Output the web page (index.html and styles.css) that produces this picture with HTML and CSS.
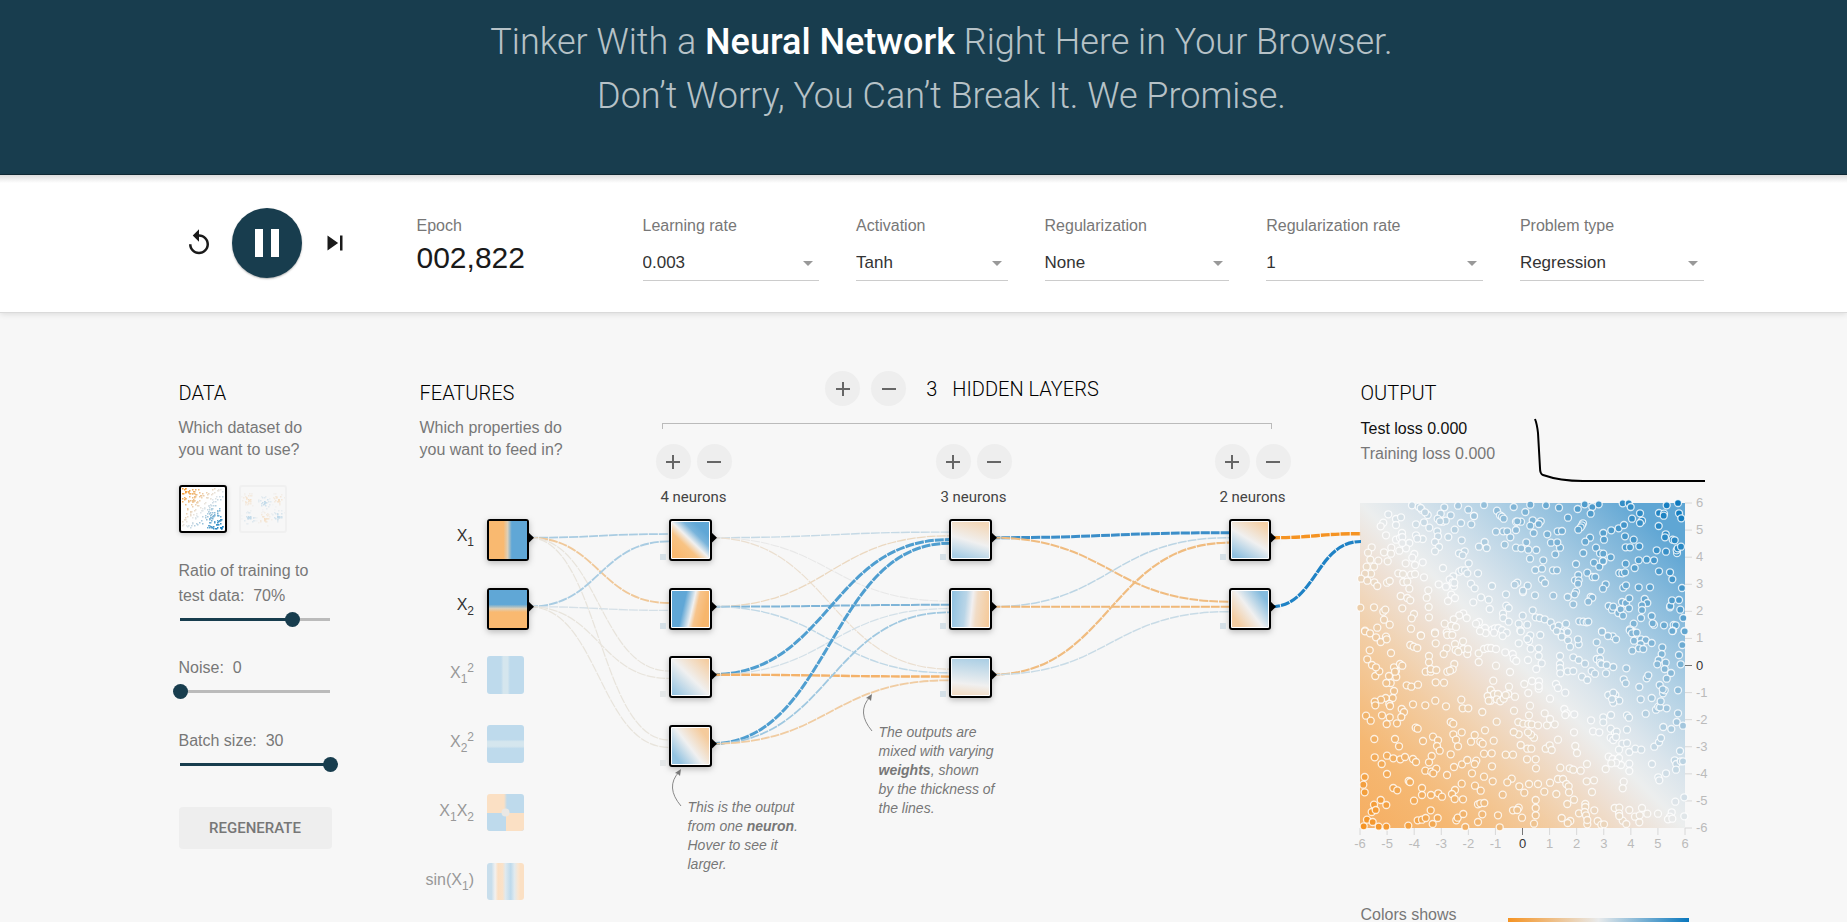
FILE: index.html
```html
<!DOCTYPE html>
<html lang="en">
<head>
<meta charset="utf-8">
<title>Neural Network Playground</title>
<link rel="stylesheet" href="styles.css">
</head>
<body>
<header class="hero">
  <h1>Tinker With a <b>Neural Network</b> Right Here in Your Browser.<br>Don’t Worry, You Can’t Break It. We Promise.</h1>
</header>

<section class="top-controls">
  <div class="page top-row">
    <div class="timeline">
      <button class="icon-btn" aria-label="Reset"><svg width="30" height="30" viewBox="0 0 24 24"><path d="M12 5V1L7 6l5 5V7c3.31 0 6 2.69 6 6s-2.69 6-6 6-6-2.69-6-6H4c0 4.42 3.58 8 8 8s8-3.58 8-8-3.58-8-8-8z"/></svg></button>
      <button class="play-btn" aria-label="Pause"><svg width="48" height="48" viewBox="0 0 24 24"><path d="M6 19h4V5H6v14zm8-14v14h4V5h-4z"/></svg></button>
      <button class="icon-btn" aria-label="Step"><svg width="30" height="30" viewBox="0 0 24 24"><path d="M6 18l8.500-6L6 6v12zM16 6v12h2V6h-2z"/></svg></button>
    </div>
    <div class="epoch"><span class="label">Epoch</span><span class="epoch-value">002,822</span></div>
    <div class="selects">
      <div class="field"><label for="lr">Learning rate</label><select id="lr"><option>0.003</option></select></div>
      <div class="field"><label for="act">Activation</label><select id="act"><option>Tanh</option></select></div>
      <div class="field"><label for="reg">Regularization</label><select id="reg"><option>None</option></select></div>
      <div class="field"><label for="rate">Regularization rate</label><select id="rate"><option>1</option></select></div>
      <div class="field"><label for="problem">Problem type</label><select id="problem"><option>Regression</option></select></div>
    </div>
  </div>
</section>

<main class="page main">
  <section class="data">
    <h2>Data</h2>
    <p class="hint">Which dataset do<br>you want to use?</p>
    <div class="datasets">
      <button class="thumb selected" aria-label="Plane"><svg id="plane" width="44" height="44"></svg></button>
      <button class="thumb" aria-label="Multi gaussian"><svg id="gauss" width="44" height="44"></svg></button>
    </div>
    <div class="slider ratio"><label for="ratio">Ratio of training to<br>test data:&nbsp; 70%</label><input class="r75" id="ratio" type="range" min="10" max="90" value="70"></div>
    <div class="slider"><label for="noise">Noise:&nbsp; 0</label><input class="r0" id="noise" type="range" min="0" max="50" value="0"></div>
    <div class="slider"><label for="batch">Batch size:&nbsp; 30</label><input class="r100" id="batch" type="range" min="1" max="30" value="30"></div>
    <button class="regen">Regenerate</button>
  </section>

  <div class="right">
    <section class="network">
      <div class="net-head">
        <div class="features">
          <h2>Features</h2>
          <p class="hint">Which properties do<br>you want to feed in?</p>
        </div>
        <div class="hidden-layers">
          <div class="hidden-title">
            <button class="round" aria-label="Add layer"><svg width="24" height="24" viewBox="0 0 24 24"><path d="M19 13h-6v6h-2v-6H5v-2h6V5h2v6h6v2z"/></svg></button>
            <button class="round" aria-label="Remove layer"><svg width="24" height="24" viewBox="0 0 24 24"><path d="M19 13H5v-2h14v2z"/></svg></button>
            <h2><span class="count">3</span>Hidden layers</h2>
          </div>
          <div class="bracket"></div>
        </div>
      </div>
      <div class="diagram">
        <svg id="net" width="941" height="490" viewBox="420 432 941 490"></svg>
        <div class="layer-ctl l1"><div class="pair"><button class="round" aria-label="Add neuron"><svg width="24" height="24" viewBox="0 0 24 24"><path d="M19 13h-6v6h-2v-6H5v-2h6V5h2v6h6v2z"/></svg></button><button class="round" aria-label="Remove neuron"><svg width="24" height="24" viewBox="0 0 24 24"><path d="M19 13H5v-2h14v2z"/></svg></button></div><span>4 neurons</span></div>
        <div class="layer-ctl l2"><div class="pair"><button class="round" aria-label="Add neuron"><svg width="24" height="24" viewBox="0 0 24 24"><path d="M19 13h-6v6h-2v-6H5v-2h6V5h2v6h6v2z"/></svg></button><button class="round" aria-label="Remove neuron"><svg width="24" height="24" viewBox="0 0 24 24"><path d="M19 13H5v-2h14v2z"/></svg></button></div><span>3 neurons</span></div>
        <div class="layer-ctl l3"><div class="pair"><button class="round" aria-label="Add neuron"><svg width="24" height="24" viewBox="0 0 24 24"><path d="M19 13h-6v6h-2v-6H5v-2h6V5h2v6h6v2z"/></svg></button><button class="round" aria-label="Remove neuron"><svg width="24" height="24" viewBox="0 0 24 24"><path d="M19 13H5v-2h14v2z"/></svg></button></div><span>2 neurons</span></div>
        <p class="callout c1">This is the output<br>from one <b>neuron</b>.<br>Hover to see it<br>larger.</p>
        <p class="callout c2">The outputs are<br>mixed with varying<br><b>weights</b>, shown<br>by the thickness of<br>the lines.</p>
      </div>
    </section>

    <section class="output">
      <h2>Output</h2>
      <div class="metrics">
        <div class="losses"><div class="test">Test loss 0.000</div><div>Training loss 0.000</div></div>
        <svg class="loss-chart" width="172" height="70" viewBox="0 0 172 70"><path d="M2 1Q4 6 5 15L7 50Q7 56 10 57Q27 63 50 63H172"/></svg>
      </div>
      <svg id="heat" width="352" height="358" viewBox="-8 -6 352 358"></svg>
      <div class="legend"><span>Colors shows</span><div class="legend-bar"></div></div>
    </section>
  </div>
</main>
<script src="script.js"></script>
</body>
</html>
```
FILE: styles.css
```css
* { box-sizing: border-box; }
body {
  margin: 0;
  height: 100vh;
  overflow: hidden;
  background: #f7f7f7;
  color: #777;
  font: 16px/22px "Liberation Sans", Arial, sans-serif;
}
button { border: 0; padding: 0; background: none; cursor: pointer; display: flex; align-items: center; justify-content: center; }
h1, h2, p { margin: 0; }
h2 {
  font: 300 20px/24px Roboto, sans-serif;
  color: #000;
  text-transform: uppercase;
}
.page { width: calc(100% - 36px); max-width: 1526px; margin: 0 auto; left: 18px; position: relative; }

.hero { height: 175px; padding: 15px 0 0 36px; background: #183d4e; border-bottom: 1px solid #0f2a36; }
.hero h1 {
  font: 300 36px/54px Roboto, sans-serif;
  text-align: center;
  color: rgba(255, 255, 255, 0.7);
}
.hero b { font-weight: 500; color: #fff; }

.top-controls {
  background: linear-gradient(#dcdcdc, #fff 8px);
  border-bottom: 1px solid #dadada;
  box-shadow: 0 1px 6px rgba(0, 0, 0, 0.12);
  position: relative;
}
.top-row { display: flex; height: 137px; align-items: flex-start; }
.timeline { width: 238px; flex: none; display: flex; align-items: center; padding: 33px 0 0 5px; gap: 18px; }
.icon-btn { width: 30px; height: 30px; fill: #1a1a1a; }
.play-btn { width: 70px; height: 70px; border-radius: 50%; background: #183d4e; fill: #fff; box-shadow: 0 1px 2px rgba(0, 0, 0, 0.3); }
.epoch { width: 226px; flex: none; padding-top: 40px; display: flex; flex-direction: column; }
.epoch-value { font-size: 30px; line-height: 34px; margin-top: 4px; color: #1a1a1a; }
.selects { flex: 1; padding-top: 40px; display: grid; grid-template-columns: 176fr 151fr 184fr 216fr 184fr; gap: 37px; }
.field { display: flex; flex-direction: column; gap: 9px; }
select {
  appearance: none;
  width: 100%;
  height: 35px;
  border: 0;
  border-bottom: 1px solid #ccc;
  border-radius: 0;
  padding: 0;
  color: #333;
  font: 17px/34px "Liberation Sans", Arial, sans-serif;
  background: url("data:image/svg+xml,%3Csvg xmlns='http://www.w3.org/2000/svg' width='10' height='5'%3E%3Cpath d='M0 0h10L5 5z' fill='%23999'/%3E%3C/svg%3E") no-repeat right 6px center;
}

.main { display: flex; justify-content: space-between; padding-top: 68px; }
.data { width: 154px; }
.hint { padding-top: 12px; line-height: 22px; white-space: nowrap; }
.datasets { display: flex; gap: 12px; padding-top: 24px; }
.thumb { width: 48px; height: 48px; border: 2px solid #ddd; border-radius: 3px; background: #f7f7f7; opacity: 0.25; }
.thumb.selected { border-color: #000; background: #fff; opacity: 1; box-shadow: 0 1px 5px rgba(0, 0, 0, 0.2); }
.slider { height: 73px; white-space: nowrap; line-height: 25px; }
.slider.ratio { padding-top: 25px; height: 122px; }
.slider label { display: block; }
input[type="range"] {
  appearance: none;
  display: block;
  width: 165px;
  height: 15px;
  margin: 4px 0 0 -6px;
  border: solid transparent;
  border-width: 6px 0;
  background: none;
  position: relative;
}
input[type="range"]::-webkit-slider-runnable-track {
  height: 3px;
  background: linear-gradient(#183d4e, #183d4e) no-repeat 7px 0 / 0 3px, linear-gradient(#bbb, #bbb) no-repeat 7px 0 / 150px 3px;
}
input.r75::-webkit-slider-runnable-track { background-size: 113px 3px, 150px 3px; }
input.r100::-webkit-slider-runnable-track { background-size: 150px 3px, 150px 3px; }
input[type="range"]::-webkit-slider-thumb {
  appearance: none;
  width: 15px;
  height: 15px;
  margin-top: -6px;
  border-radius: 50%;
  background: #183d4e;
}
.regen {
  width: 153px;
  height: 42px;
  margin-top: 6px;
  border-radius: 4px;
  background: #eee;
  color: #777;
  font: 500 15px/42px Roboto, sans-serif;
  text-transform: uppercase;
}

.right { display: flex; }
.network { width: 941px; }
.net-head { display: flex; height: 51px; }
.features { width: 242px; }
.hidden-layers { width: 610px; }
.hidden-title { display: flex; align-items: center; justify-content: center; gap: 11px; height: 35px; margin-top: -10px; padding-right: 9px; }
.hidden-title h2 { padding-left: 9px; }
.count { margin-right: 15px; }
.bracket { height: 6px; margin-top: 17px; border: 1px solid #bbb; border-bottom: 0; }
.round { width: 35px; height: 35px; border-radius: 50%; background: #eee; fill: #666; }
.diagram { position: relative; }
#net { display: block; overflow: visible; }
.layer-ctl { position: absolute; top: 12px; width: 78px; display: flex; flex-direction: column; gap: 7px; align-items: center; font: 15px/22px Roboto, sans-serif; color: #444; }
.pair { display: flex; gap: 6px; }
.l1 { left: 235px; }
.l2 { left: 515px; }
.l3 { left: 794px; }
.callout { position: absolute; font-size: 14px; line-height: 19px; font-style: italic; white-space: nowrap; }
.c1 { left: 268px; top: 366px; }
.c2 { left: 459px; top: 291px; }

.output { width: 344px; }
.metrics { display: flex; justify-content: space-between; height: 92px; padding-top: 11px; }
.losses { line-height: 25px; white-space: nowrap; }
.test { color: #111; }
.loss-chart { margin-top: 2px; fill: none; stroke: #000; stroke-width: 2; }
#heat { display: block; margin-left: -9px; overflow: visible; }
.legend { display: flex; justify-content: space-between; padding: 49px 16px 0 0; }
.legend-bar { width: 181px; height: 12px; margin-top: 14px; background: linear-gradient(to right, #f59322, #e8eaeb, #0877bd); flex: none; }

#net text { font: 16px "Liberation Sans", Arial, sans-serif; fill: #333; text-anchor: end; }
#net text.off { fill: #999; }
#net .small { font-size: 12px; }
#net .link { fill: none; stroke-dasharray: 9 1; }
#net .arrow { fill: none; stroke: #888; }
#net .tip { fill: #777; }
#net .active { filter: drop-shadow(0 2px 3px rgba(0, 0, 0, 0.25)); }
#heat text { font: 13px "Liberation Sans", Arial, sans-serif; fill: #bbb; }
#heat text.zero { fill: #333; }
#heat circle { stroke: #fff; stroke-width: 1.3px; stroke-opacity: 0.8; }
```
FILE: script.js
```js
const NS = 'http://www.w3.org/2000/svg';
function el(parent, name, attrs, text) {
  const e = document.createElementNS(NS, name);
  for (const k in attrs) e.setAttribute(k, attrs[k]);
  if (text !== undefined) e.textContent = text;
  parent.appendChild(e);
  return e;
}
const mix = (a, b, t) => 'rgb(' + a.map((v, i) => Math.round(v + (b[i] - v) * t)).join() + ')';
const ORANGE = [245, 147, 34], MID = [232, 234, 235], BLUE = [8, 119, 189];
const color = t => t < 0.5 ? mix(ORANGE, MID, t * 2) : mix(MID, BLUE, t * 2 - 1);

let gid = 0;
function gradient(svg, v, stops) {
  const id = 'g' + gid++;
  const g = el(svg, 'linearGradient', { id, x1: v[0], y1: v[1], x2: v[2], y2: v[3] });
  stops.forEach(s => el(g, 'stop', { offset: s[0], 'stop-color': s[1] }));
  return 'url(#' + id + ')';
}

/* Network */
const net = document.getElementById('net');
const ROWS = [519, 588, 656, 725, 794, 863];
const XS = [487, 669, 949, 1229];
function link(x1, r1, x2, y2, c, w) {
  const y1 = r1 + 18.7, m = (x1 + x2) / 2;
  el(net, 'path', { class: 'link', d: `M${x1} ${y1}C${m} ${y1} ${m} ${y2} ${x2} ${y2}`, stroke: c, 'stroke-width': w });
}
const WEIGHTS = [
  [[['#a9cce2', 1.7], ['#f0c899', 1.9], ['#e8e4dc', 1.2], ['#e8e4dc', 1.2]],
   [['#a9cce2', 1.9], ['#d5e0e7', 1.3], ['#e8e4dc', 1.2], ['#e8e4dc', 1.2]]],
  [[['#c5d9e5', 1.4], ['#e8e8e8', 1.1], ['#ebdfd0', 1.2]],
   [['#ebd8c0', 1.3], ['#7fb5d8', 2], ['#c0d8e6', 1.4]],
   [['#4f9ed0', 3], ['#d3e0e8', 1.2], ['#f4b26a', 2.4]],
   [['#4f9ed0', 3], ['#a0c8e0', 1.8], ['#f0cca2', 1.8]]],
  [[['#3b8ec9', 3], ['#f0bc80', 2]],
   [['#bcd5e4', 1.5], ['#f0b878', 2]],
   [['#f0bc80', 2.2], ['#c8dbe6', 1.5]]]
];
const SPACING = [7.4, 3.75, 5];
WEIGHTS.forEach((layer, l) => layer.forEach((outs, i) => outs.forEach(([c, w], j) => {
  const y2 = ROWS[j] + 18.7 + (i - (layer.length - 1) / 2) * SPACING[l];
  link(XS[l] + 42, ROWS[i], XS[l + 1], y2, c, w);
})));
link(1271, 519, 1361, 533.7, '#f59322', 3.4);
link(1271, 588, 1361, 541.5, '#1f82c5', 3.2);

const M = '#f0f0f0', O = '#f9b970', B = '#60a7d6', PB = '#bedaec';
const SKINS = [
  [[[0, 0, 1, 0], [[.38, O], [.49, '#dccfb9'], [.6, B]]],
   [[0, 0, 0, 1], [[.38, B], [.49, '#dccfb9'], [.58, O]]]],
  [[[0, 1, 1, 0], [[.1, O], [.35, '#f8c384'], [.5, M], [.66, '#79b4db'], [.8, B]]],
   [[0, .39, 1, .61], [[.3, B], [.54, M], [.66, '#f7c48c'], [.9, '#f7b66c']]],
   [[0, 1, 1, 0], [[.02, '#93c3e1'], [.5, M], [.98, '#f5cb9c']]],
   [[.1, .8, .9, .2], [[0, '#93c3e1'], [.47, M], [1, '#f5cb9c']]]],
  [[[.35, 1, .65, 0], [[0, '#a9cee5'], [.47, M], [1, '#f3d8b9']]],
   [[0, .45, 1, .55], [[0, '#93c3e1'], [.35, '#b9d5e7'], [.53, '#f1eff0'], [.66, '#f1dcc6'], [1, '#f5cb9c']]],
   [[.55, 0, .45, 1], [[0, '#aed0e5'], [.7, M], [1, '#f2ddc7']]]],
  [[[.2, 1, .8, 0], [[0, '#8ec0e0'], [.5, M], [1, '#f4cfa5']]],
   [[.1, .8, .9, .2], [[0, '#f4cda2'], [.48, M], [1, '#84bbde']]]]
];
SKINS.forEach((layer, l) => layer.forEach(([v, stops], i) => {
  const x = XS[l], y = ROWS[i], w = l === 3 || l === 0 ? 42 : 43;
  const g = el(net, 'g', { class: 'active' });
  el(g, 'rect', { x, y, width: w, height: 42, rx: 3, fill: '#000' });
  el(g, 'path', { d: `M${x + w - 1} ${y + 13}l6 5.700l-6 5.700z` });
  if (l) {
    el(g, 'rect', { x: x + 2, y: y + 2, width: w - 4, height: 38, rx: 1, fill: '#fff' });
    el(net, 'rect', { x: x - 9, y: y + 35, width: 6, height: 6, fill: (l === 1 && i > 1) ? '#e4e7e8' : '#d5e0e7' });
  }
  const p = l ? 3 : 2;
  el(g, 'rect', { x: x + p, y: y + p, width: w - 2 * p, height: 42 - 2 * p, fill: gradient(net, v, stops) });
}));
/* Inactive features */
function tile(i, v, stops) {
  el(net, 'rect', { x: 487, y: ROWS[i], width: 37, height: i < 4 ? 38 : 37, rx: 3, fill: gradient(net, v, stops) });
}
const band = [[.38, PB], [.44, '#d5e6ee'], [.56, '#d5e6ee'], [.62, PB]];
tile(2, [0, 0, 1, 0], band);
tile(3, [0, 0, 0, 1], band);
tile(4, [0, 0, 1, 0], [[.46, '#fbe0c4'], [.54, PB]]);
el(net, 'path', { d: 'M487 813h19v18h-16q-3 0-3-3z', fill: PB });
el(net, 'path', { d: 'M506 813h18v15q0 3-3 3h-15z', fill: '#fbe0c4' });
el(net, 'circle', { cx: 505.5, cy: 812.5, r: 4, fill: '#eae8e4' });
tile(5, [0, 0, 1, 0], [[.12, '#c8deec'], [.22, '#f2f1f0'], [.3, '#fbdfc2'], [.42, '#fae2c9'], [.5, '#dfe9ee'], [.64, PB], [.74, '#e0eaef'], [.84, '#f9e6d2'], [.9, '#fbe0c4']]);

function label(row, off, parts) {
  const t = el(net, 'text', { x: 474, y: ROWS[row] + 22, class: off ? 'off' : 'on' });
  parts.forEach(([s, dy]) => el(t, 'tspan', { dy: dy || 0, class: /^\d$/.test(s) ? 'small' : 'big' }, s));
}
label(0, 0, [['X'], ['1', 5]]);
label(1, 0, [['X'], ['2', 5]]);
label(2, 1, [['X'], ['1', 5], ['2', -11]]);
label(3, 1, [['X'], ['2', 5], ['2', -11]]);
label(4, 1, [['X'], ['1', 5], ['X', -5], ['2', 5]]);
label(5, 1, [['sin(X'], ['1', 5], [')', -5]]);

[[680, 769], [871, 694]].forEach(([x, y]) => {
  el(net, 'path', { class: 'arrow', d: `M${x + 1} ${y + 37}Q${x - 15} ${y + 18} ${x - 1} ${y + 3}` });
  el(net, 'path', { class: 'tip', d: `M${x + 1} ${y}l-1 7l-2-2l-3-1z` });
});

/* Output heatmap */
const heat = document.getElementById('heat');
const hg = gradient(heat, [0, 1, 1, 0], [[0, '#f6ae61'], [.14, '#f5b873'], [.3, '#f2cda4'], [.43, '#eee1d6'], [.5, '#eceeee'], [.57, '#dbe5ec'], [.7, '#b2d1e5'], [.84, '#7fb6da'], [.92, '#5fa6d4'], [1, '#5fa6d4']]);
el(heat, 'rect', { width: 325, height: 325, fill: hg });
for (let i = -6; i <= 6; i++) {
  const p = (i + 6) * 325 / 12, z = i === 0;
  el(heat, 'path', { d: `M${p} 325v7M325 ${325 - p}h7`, stroke: z ? '#777' : '#d8d8d8' });
  el(heat, 'text', { x: p, y: 345, 'text-anchor': 'middle', class: z ? 'zero' : 'tick' }, i);
  el(heat, 'text', { x: 336, y: 329 - p, class: z ? 'zero' : 'tick' }, i);
}
/* Samples in thirds of a pixel: upper half and lower half of the plot */
const UPPER = `216 407 236 411 245 420 313 413 354 408 385 420 432 406 402 439 471 423 521 412 571 405 556 427 618 407 657 414 713 418 734 404 757 412 776 404 752 432 848 401 866 401 872 412 900 431 957 430 980 407 1014 400 972 432 1017 431 1024 446 145 434 168 448 183 443 130 459 122 470 168 466 263 436 242 415 255 428 302 432 332 437 293 447 308 456 317 453 300 455 228 464 252 458 268 474 363 460 394 464 402 439 344 480 292 485 294 500 325 502 365 512 480 437 486 441 491 447 528 456 543 456 532 455 578 452 602 455 596 463 571 468 528 481 581 490 622 494 653 485 666 484 684 444 729 461 726 467 722 473 715 480 790 490 814 482 836 476 852 466 876 447 906 453 900 460 956 469 971 438 977 494 975 503 998 510 1004 512 138 497 186 490 168 510 180 505 187 502 208 520 198 536 228 497 248 508 232 507 154 534 132 548 153 552 178 543 187 520 223 553 285 517 297 532 285 545 374 545 357 551 368 557 434 517 417 531 440 535 468 486 490 485 502 485 511 503 494 525 528 534 544 536 559 518 565 540 589 541 570 567 610 572 646 554 660 534 633 519 652 518 750 504 736 516 730 550 792 510 768 534 780 551 790 552 812 563 855 500 881 510 857 533 870 533 898 530 950 542 978 546 1011 550 1010 542 1013 536 1023 531 95 533 84 549 91 570 115 573 143 575 80 591 93 612 102 591 75 612 63 627 82 633 103 638 112 649 141 639 149 634 197 581 225 586 217 564 248 578 175 611 189 613 190 637 202 636 208 657 213 615 225 613 252 623 182 679 202 685 211 692 187 716 265 662 260 684 266 712 267 743 222 733 215 746 61 714 102 713 130 726 136 720 132 750 149 765 75 783 112 774 213 777 242 797 285 788 314 762 320 788 138 801 309 595 358 606 365 602 375 602 386 581 414 611 382 611 340 620 329 629 342 650 338 638 318 651 296 644 343 639 393 642 404 656 456 649 334 675 345 685 324 694 400 698 423 683 446 690 449 718 370 731 358 737 341 749 380 745 334 768 348 772 417 757 408 762 435 775 457 780 465 776 475 775 486 781 498 674 532 639 524 645 549 667 563 648 549 663 585 677 578 722 499 708 506 715 489 732 490 745 506 756 548 738 587 743 599 745 614 749 632 758 641 773 536 762 541 782 562 765 571 797 586 601 606 597 639 602 651 602 606 629 615 640 640 678 708 583 762 579 790 575 778 591 789 574 742 609 758 622 766 622 715 616 705 632 716 632 714 642 797 644 789 657 708 666 704 674 683 682 752 682 757 684 745 696 700 704 718 755 730 756 740 758 745 756 678 762 679 785 656 768 662 789 806 709 816 720 820 711 835 730 842 719 849 738 851 699 846 697 858 700 867 716 868 686 850 654 858 647 838 610 847 611 855 608 857 582 884 595 896 572 920 570 942 572 957 605 990 608 997 629 1026 655 896 653 930 653 914 688 922 700 906 707 906 721 903 745 935 739 881 762 870 779 880 787 942 765 938 761 972 767 990 713 991 709 996 692 1017 691 1021 720 1030 745 1001 766 1007 767 999 783 1034 784 786 785 818 800 869 782 885 790`;
const LOWER = `75 4 90 10 108 22 122 36 140 28 89 61 153 69 82 88 96 105 106 138 118 124 108 112 147 138 168 123 162 112 180 102 187 107 169 141 165 125 152 159 139 159 162 183 158 204 137 204 123 209 104 215 106 226 148 222 150 228 185 237 192 246 126 256 149 262 184 261 78 257 92 272 140 282 171 280 103 327 165 327 177 349 104 382 125 402 141 377 160 385 181 388 195 381 219 387 228 396 141 432 74 441 70 464 74 487 160 474 172 481 206 453 210 456 246 474 246 495 222 512 122 510 139 525 102 524 95 546 107 540 81 569 98 576 71 589 116 590 139 590 205 587 233 571 246 569 257 564 272 541 293 564 278 582 211 45 221 50 232 54 243 17 285 10 287 40 322 15 337 15 345 42 347 60 320 55 369 34 370 57 382 72 355 65 384 57 311 72 267 78 267 97 257 125 272 125 272 117 289 120 343 102 338 118 322 125 330 122 200 166 214 170 234 164 287 157 312 158 219 223 256 226 286 212 318 229 364 209 368 235 385 235 427 246 416 96 416 70 432 57 443 54 453 54 468 57 468 107 496 67 510 126 518 72 521 86 529 93 507 170 505 192 460 152 452 180 443 198 452 212 446 212 462 192 474 192 470 208 481 214 491 206 497 195 525 200 522 242 470 275 435 301 332 276 340 281 365 307 340 313 348 329 279 320 294 331 249 333 227 293 233 296 275 378 291 348 299 362 267 397 256 422 274 425 289 416 280 430 321 435 342 411 366 403 382 390 409 392 404 402 396 430 354 349 393 335 404 315 421 335 428 341 432 371 461 332 455 370 456 409 432 440 405 467 422 482 458 454 488 494 515 446 502 457 332 373 519 374 497 374 365 461 345 480 336 492 344 507 369 508 295 490 306 500 273 495 349 571 353 563 370 552 414 576 427 553 414 523 421 520 433 519 376 591 479 592 474 556 519 541 536 533 532 540 546 563 582 581 587 556 587 534 587 510 553 488 538 469 567 462 594 462 613 485 630 458 649 492 654 447 669 447 679 462 686 469 687 487 702 509 682 522 717 550 736 522 736 531 734 546 738 556 763 541 742 583 773 573 784 584 792 583 742 570 756 486 740 454 762 451 665 564 691 573 683 579 588 415 561 388 587 388 542 345 562 356 574 356 617 356 629 346 635 360 654 329 661 413 689 415 700 419 722 422 741 402 706 348 711 369 702 307 582 323 573 314 564 307 536 313 521 306 535 276 550 281 565 282 575 283 594 286 621 286 644 283 630 267 614 250 567 256 570 227 553 162 565 189 576 153 597 154 596 176 596 168 630 206 648 162 654 174 676 188 673 237 680 250 676 255 703 253 753 271 759 304 778 307 790 262 790 277 813 255 812 296 825 309 830 305 812 323 820 330 828 321 847 341 837 359 861 339 868 366 868 401 868 423 861 299 861 256 867 263 886 356 904 359 806 380 818 387 833 389 843 405 837 384 828 398 797 417 814 400 851 455 848 475 824 534 838 533 837 550 848 572 838 558 859 582 868 540 885 560 898 577 899 556 906 534 922 551 954 551 995 547 990 560 984 568 997 566 1006 515 1033 559 1033 502 936 402 978 430 955 442 958 451 1004 391 1009 402 1008 419 1020 363 1022 394 1029 394 943 350 957 337 963 324 970 291 994 297 1010 276 1014 250 1029 287 917 251 948 239 955 230 980 235 960 232 902 208 935 204 962 214 969 190 974 181 959 165 968 178 1014 181 898 171 920 145 925 136 851 148 857 160 859 115 820 111 805 195 826 195 820 188 827 210 838 212 820 218 816 207 660 78 660 102 660 114 661 130 683 124 700 123 684 31 716 43 690 50 683 6 650 3 665 20 714 28 700 82 716 90 735 101 726 140 742 150 755 123 765 131 770 87 780 86 780 98 784 102 798 130 800 105 770 37 782 62 804 18 828 28 786 5 601 15 567 33 572 56 596 55 596 78 605 100 589 117 564 90 536 40 562 27 542 4 500 8 488 18 462 8 437 9 420 3 876 10 890 8 882 32 903 28 917 30 935 39 902 42 897 55 910 57 877 62 967 52 965 72 956 90 952 103 977 98 974 117 993 129 980 146 1017 75 1022 103 1027 45 997 3 1034 4`;
const SAMPLES = [[UPPER, 60, 400], [LOWER, 60, -381]];
SAMPLES.forEach(([s, ox, oy]) => {
  const n = s.split(' ').map(Number);
  for (let i = 0; i < n.length; i += 2) {
    const x = (n[i] - ox) / 3, y = (n[i + 1] - oy) / 3;
    el(heat, 'circle', { cx: x.toFixed(1), cy: y.toFixed(1), r: 3.5, fill: color((x + 325 - y) / 650) });
  }
});

/* Dataset thumbnails */
let seed = 7;
const rnd = () => (seed = (seed * 16807) % 2147483647) / 2147483647;
const plane = document.getElementById('plane'), gauss = document.getElementById('gauss');
for (let i = 0; i < 230; i++) {
  let x = rnd(), y = rnd();
  if (i % 4 === 0) { const k = i % 8 ? 1 : 0; x = k + (k ? -.35 : .35) * x; y = k + (k ? -.35 : .35) * y; }
  el(plane, 'rect', { x: 1 + Math.round(x * 40), y: 1 + Math.round(y * 40), width: 1.5, height: 1.5, fill: color((x + y) / 2) });
}
[[7, 12, 0], [23, 15, 1], [37, 12, 0], [8, 30, 1], [23, 31, 0], [37, 29, 1]].forEach(([cx, cy, c]) => {
  for (let i = 0; i < 28; i++) {
    const r = rnd() * 8, a = rnd() * 6.28;
    const t = 0.5 + (c ? 1 : -1) * Math.max(0, 0.5 - r / 16);
    el(gauss, 'rect', { x: Math.round(cx + r * Math.cos(a)), y: Math.round(cy + r * Math.sin(a)), width: 1.5, height: 1.5, fill: color(t) });
  }
});
```
